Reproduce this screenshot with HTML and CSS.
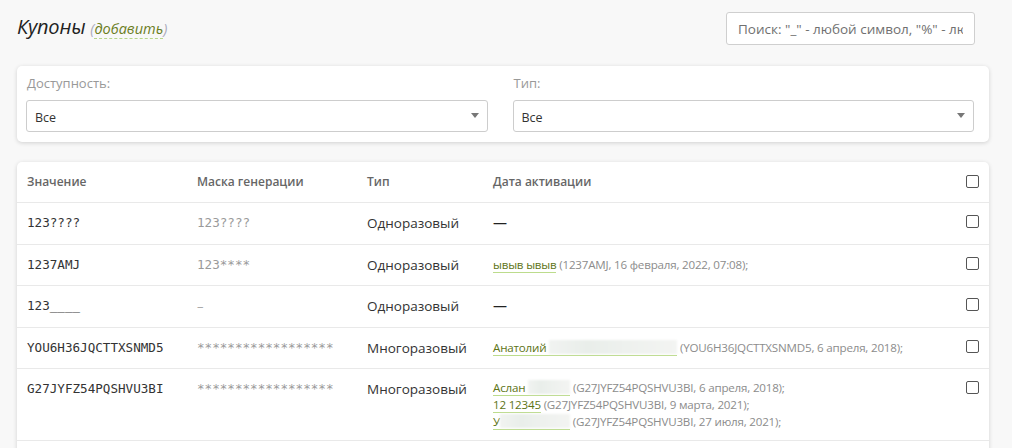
FILE: index.html
```html
<!DOCTYPE html>
<html lang="ru">
<head>
<meta charset="utf-8">
<link rel="stylesheet" href="styles.css">
</head>
<body>
<div class="page">
  <div class="top">
    <h1 class="title">Купоны <span class="add">(<a class="add-link">добавить</a>)</span></h1>
    <input class="search" type="text" placeholder="Поиск: &quot;_&quot; - любой символ, &quot;%&quot; - любая последовательность">
  </div>

  <div class="card filters">
    <div class="field">
      <div class="label">Доступность:</div>
      <div class="select"><span>Все</span><i class="arrow"></i></div>
    </div>
    <div class="field">
      <div class="label">Тип:</div>
      <div class="select"><span>Все</span><i class="arrow"></i></div>
    </div>
  </div>

  <div class="card tablecard">
    <table class="grid">
      <colgroup>
        <col class="c1"><col class="c2"><col class="c3"><col class="c4"><col class="c5">
      </colgroup>
      <thead>
        <tr>
          <th>Значение</th>
          <th>Маска генерации</th>
          <th>Тип</th>
          <th>Дата активации</th>
          <th class="chk"><span class="box"></span></th>
        </tr>
      </thead>
      <tbody>
        <tr>
          <td class="mono">123????</td>
          <td class="mono mask">123????</td>
          <td class="type">Одноразовый</td>
          <td class="act"><span class="none">—</span></td>
          <td class="chk"><span class="box"></span></td>
        </tr>
        <tr>
          <td class="mono">1237AMJ</td>
          <td class="mono mask">123****</td>
          <td class="type">Одноразовый</td>
          <td class="act single"><a class="user">ывыв ывыв</a> <span class="info">(1237AMJ, 16 февраля, 2022, 07:08);</span></td>
          <td class="chk"><span class="box"></span></td>
        </tr>
        <tr>
          <td class="mono">123____</td>
          <td class="mask dash">–</td>
          <td class="type">Одноразовый</td>
          <td class="act"><span class="none">—</span></td>
          <td class="chk"><span class="box"></span></td>
        </tr>
        <tr>
          <td class="mono">YOU6H36JQCTTXSNMD5</td>
          <td class="mono mask">******************</td>
          <td class="type">Многоразовый</td>
          <td class="act single"><a class="user">Анатолий <span class="blur b1"></span></a> <span class="info">(YOU6H36JQCTTXSNMD5, 6 апреля, 2018);</span></td>
          <td class="chk"><span class="box"></span></td>
        </tr>
        <tr>
          <td class="mono">G27JYFZ54PQSHVU3BI</td>
          <td class="mono mask">******************</td>
          <td class="type">Многоразовый</td>
          <td class="act">
            <div class="line"><a class="user">Аслан <span class="blur b2"></span></a> <span class="info">(G27JYFZ54PQSHVU3BI, 6 апреля, 2018);</span></div>
            <div class="line"><a class="user">12 12345</a> <span class="info">(G27JYFZ54PQSHVU3BI, 9 марта, 2021);</span></div>
            <div class="line"><a class="user">У<span class="blur b3"></span></a> <span class="info">(G27JYFZ54PQSHVU3BI, 27 июля, 2021);</span></div>
          </td>
          <td class="chk"><span class="box"></span></td>
        </tr>
        <tr class="last">
          <td></td><td></td><td></td><td></td><td></td>
        </tr>
      </tbody>
    </table>
  </div>
</div>
</body>
</html>
```

FILE: styles.css
```css
html, body {
  margin: 0;
  padding: 0;
  background: #f8f8f8;
  font-family: "Open Sans", "Noto Sans", sans-serif;
  color: #333;
  overflow: hidden;
}

.page {
  padding: 12px 23px 0 17px;
}

.top {
  display: flex;
  justify-content: space-between;
  align-items: flex-start;
  padding-right: 14px;
  height: 54px;
}

.title {
  margin: 0;
  padding-top: 2px;
  font-size: 20px;
  font-weight: normal;
  font-style: italic;
  color: #222;
  line-height: 26px;
  letter-spacing: -0.2px;
}

.add {
  font-size: 14.5px;
  color: #aab;
  letter-spacing: 0;
}

.add-link {
  color: #6b7d1e;
  border-bottom: 1px dashed #b6d68a;
}

.search {
  box-sizing: border-box;
  width: 249px;
  height: 33px;
  border: 1px solid #cfcfcf;
  border-radius: 3px;
  background: #fff;
  padding: 0 11px;
  font-family: "Open Sans", sans-serif;
  font-size: 13.5px;
  color: #333;
  outline: none;
}

.search::placeholder {
  color: #707070;
}

.card {
  background: #fff;
  border-radius: 5px;
  box-shadow: 0 1px 4px rgba(0, 0, 0, 0.16);
}

.filters {
  display: flex;
  gap: 25px;
  padding: 8px 15px 10px 9px;
  margin-bottom: 20px;
}

.field {
  flex: 1;
}

.label {
  font-size: 13px;
  color: #999;
  line-height: 18px;
  padding-left: 1px;
  margin-bottom: 8px;
}

.select {
  box-sizing: border-box;
  height: 32px;
  border: 1px solid #cdcdcd;
  border-radius: 3px;
  display: flex;
  align-items: center;
  justify-content: space-between;
  padding: 2px 8px 0 8px;
  font-size: 12.5px;
  color: #333;
}

.arrow {
  width: 0;
  height: 0;
  border-left: 4px solid transparent;
  border-right: 4px solid transparent;
  border-top: 5px solid #777;
  margin-top: -4px;
}

.tablecard {
  overflow: hidden;
}

.grid {
  width: 100%;
  border-collapse: collapse;
  table-layout: fixed;
}

.c1 { width: 170px; }
.c2 { width: 170px; }
.c3 { width: 126px; }
.c5 { width: 33px; }

.grid th {
  text-align: left;
  font-size: 12px;
  font-weight: 600;
  color: #666;
  padding: 10px 0 10px 10px;
  line-height: 20px;
  height: 20px;
  vertical-align: top;
  border-bottom: 1px solid #e9e9e9;
}

.grid td {
  padding: 10px 0 10px 10px;
  line-height: 20px;
  vertical-align: top;
  border-bottom: 1px solid #e9e9e9;
}

.mono {
  font-family: "DejaVu Sans Mono", "Liberation Mono", monospace;
  font-size: 12.6px;
  color: #333;
  white-space: nowrap;
}

.mask {
  color: #9a9a9a;
}

.dash {
  font-size: 13px;
  color: #aaa;
}

.type {
  font-size: 13.5px;
  color: #333;
  white-space: nowrap;
}

.act {
  font-size: 11.6px;
  letter-spacing: -0.2px;
  line-height: 17px;
  white-space: nowrap;
}

.act.single {
  line-height: 20px;
}

.act .none {
  font-size: 14px;
  line-height: 20px;
  color: #222;
  letter-spacing: 0;
}

.line {
  line-height: 17px;
}

.user {
  color: #5d7416;
  border-bottom: 1px solid #bcdc8c;
}

.info {
  color: #8c8c8c;
}

.blur {
  display: inline-block;
  height: 14px;
  vertical-align: -2px;
  background: linear-gradient(90deg, #f1f3f1 0%, #e9eeea 30%, #eef1ee 60%, #f3f4f2 100%);
  filter: blur(1px);
}

.b1 { width: 128px; }
.b2 { width: 42px; }
.b3 { width: 70px; }

.box {
  display: block;
  box-sizing: border-box;
  width: 13px;
  height: 13px;
  border: 1px solid #555;
  border-radius: 2px;
}

.grid td.chk {
  padding-top: 12px;
  padding-bottom: 0;
}

.grid th.chk {
  padding-top: 13px;
  padding-bottom: 0;
}

.last td {
  height: 20px;
  border-bottom: none;
}
```
